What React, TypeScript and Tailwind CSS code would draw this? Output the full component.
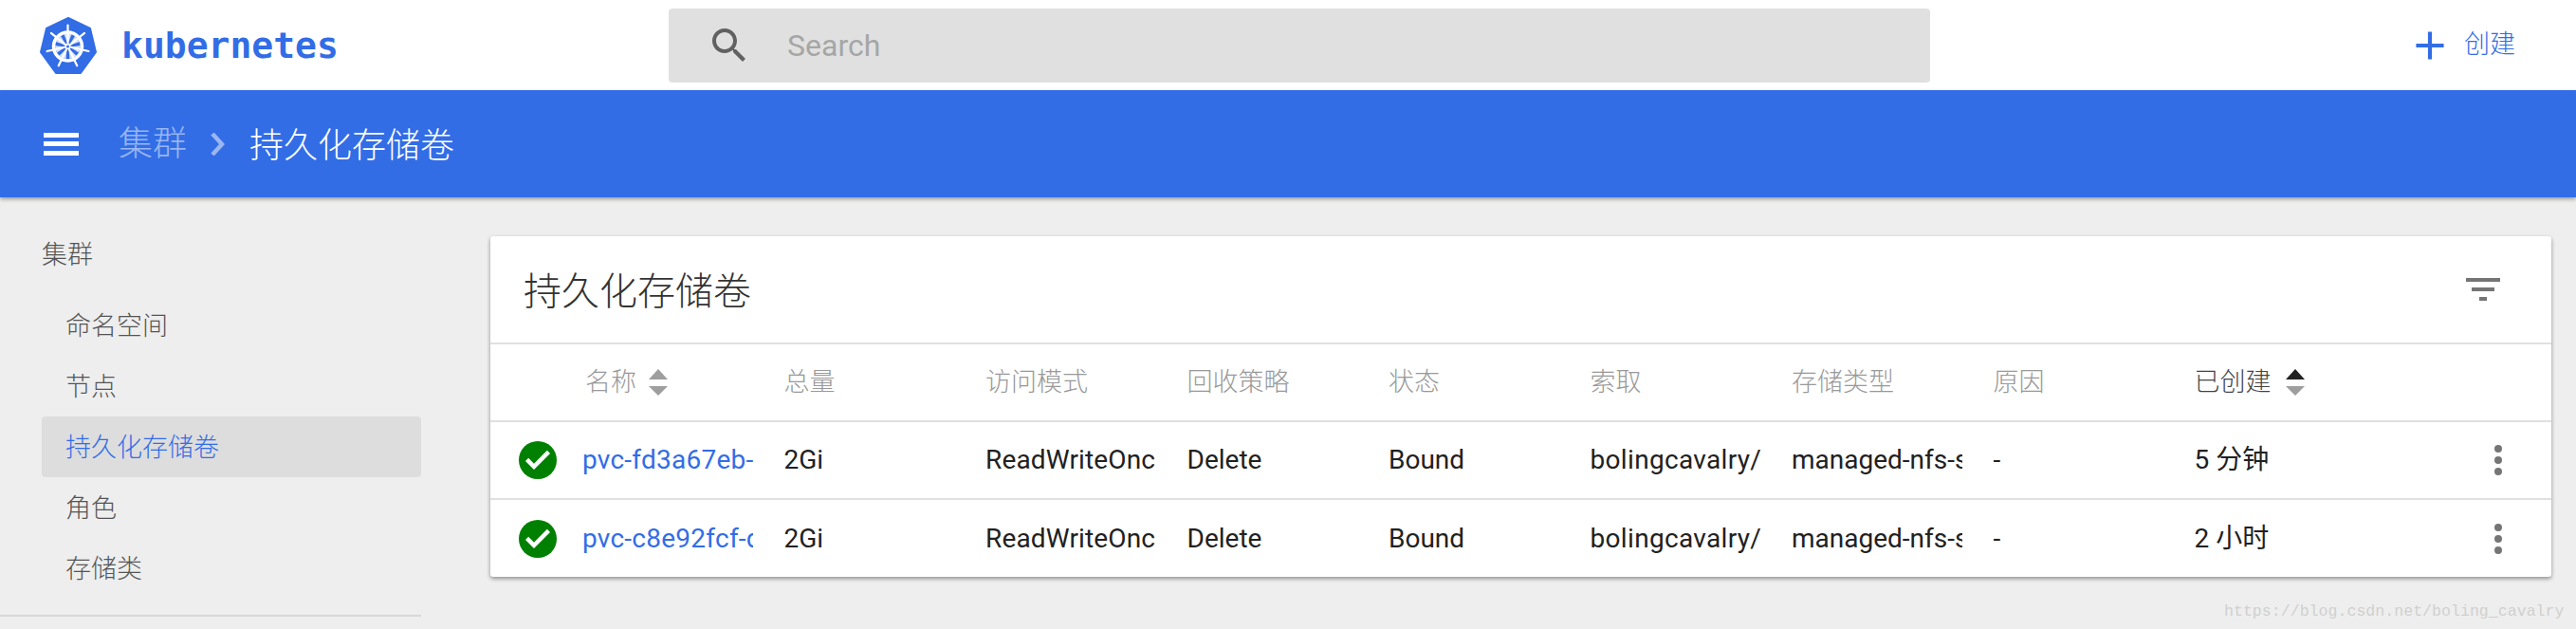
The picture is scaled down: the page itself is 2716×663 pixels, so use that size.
import React from 'react';

const cjk = "font-['Roboto','Noto_Sans_CJK_SC',sans-serif]";

const menuItems = ['命名空间', '节点', '持久化存储卷', '角色', '存储类'];

const columns = ['名称', '总量', '访问模式', '回收策略', '状态', '索取', '存储类型', '原因', '已创建'];

const rows = [
  { name: 'pvc-fd3a67eb-dc7c-11e8', age: '5 分钟' },
  { name: 'pvc-c8e92fcf-dc70-11e8', age: '2 小时' },
];

const gridCols = 'grid grid-cols-[97px_212.5px_212.5px_212.5px_212.5px_212.5px_212.5px_212.5px_212px_203px_1fr]';

function KubeLogo() {
  const spokes = [0, 51.4, 102.8, 154.3, 205.7, 257.1, 308.6];
  return (
    <svg width="60" height="60" viewBox="0 0 60 60">
      <path d="M30 1 L53 12 L59 37 L43 59 L17 59 L1 37 L7 12 Z" fill="#326de6" stroke="#326de6" strokeWidth="2" strokeLinejoin="round" />
      <circle cx="29.5" cy="31" r="15" fill="none" stroke="#fff" strokeWidth="3.5" />
      {spokes.map((a) => (
        <g key={a} transform={`rotate(${a} 29.5 31)`}>
          <line x1="29.5" y1="27.5" x2="29.5" y2="8.5" stroke="#fff" strokeWidth="2.2" strokeLinecap="round" />
          <path d="M28.5 26 L25.5 18 L33.5 18 L30.5 26 Z" fill="#fff" opacity="0.8" />
        </g>
      ))}
      <circle cx="29.5" cy="31" r="2.2" fill="#326de6" stroke="#fff" strokeWidth="1.4" />
    </svg>
  );
}

function SortIcon({ active, className }: { active?: boolean; className: string }) {
  return (
    <svg width="20" height="28" viewBox="0 0 20 28" className={`shrink-0 ${className}`}>
      <path d="M10 0 L20 11 L0 11 Z" fill={active ? '#212121' : '#9e9e9e'} />
      <path d="M0 18 L20 18 L10 28 Z" fill="#9e9e9e" />
    </svg>
  );
}

function CheckIcon() {
  return (
    <svg width="40" height="40" viewBox="0 0 24 24">
      <path fill="#008000" d="M12 0a12 12 0 1 0 0 24 12 12 0 0 0 0-24z" />
      <path fill="#fff" d="M9.6 18 4.2 12.6l1.9-1.9 3.5 3.5 8.3-8.3 1.9 1.9z" />
    </svg>
  );
}

function MoreIcon() {
  return (
    <svg width="12" height="34" viewBox="0 0 12 34">
      <circle cx="6" cy="5" r="4" fill="#757575" />
      <circle cx="6" cy="17" r="4" fill="#757575" />
      <circle cx="6" cy="29" r="4" fill="#757575" />
    </svg>
  );
}

export default function App() {
  return (
    <div className={`relative h-[663px] overflow-hidden bg-[#eeeeee] ${cjk}`}>
      {/* top toolbar */}
      <div className="flex h-[95px] items-center bg-white">
        <div className="ml-[42px] flex w-[663px] items-center">
          <KubeLogo />
          <span className="ml-[26px] font-['DejaVu_Sans_Mono',monospace] text-[38px] font-bold leading-none text-[#326de6]">kubernetes</span>
        </div>
        <div className="flex h-[78px] w-[1330px] items-center rounded-[4px] bg-[#e0e0e0]">
          <svg width="48" height="48" viewBox="0 0 24 24" className="ml-[40px]">
            <path fill="#616161" d="M15.5 14h-.79l-.28-.27C15.41 12.59 16 11.11 16 9.5 16 5.91 13.09 3 9.5 3S3 5.91 3 9.5 5.91 16 9.5 16c1.61 0 3.09-.59 4.23-1.57l.27.28v.79l5 4.99L20.49 19l-4.99-5zm-6 0C7.01 14 5 11.99 5 9.5S7.01 5 9.5 5 14 7.01 14 9.5 11.99 14 9.5 14z" />
          </svg>
          <span className="ml-[37px] text-[32px] text-[#a6a6a6]">Search</span>
        </div>
        <div className="ml-[502px] flex items-center text-[#326de6]">
          <svg width="50" height="50" viewBox="0 0 24 24">
            <path fill="#326de6" d="M19 13h-6v6h-2v-6H5v-2h6V5h2v6h6v2z" />
          </svg>
          <span className="ml-[11px] text-[27px] font-light">创建</span>
        </div>
      </div>

      {/* blue breadcrumb bar */}
      <div className="flex h-[113px] items-center bg-[#326de6] pl-[46px] shadow-[0_2px_4px_rgba(0,0,0,0.35)]">
        <div className="flex h-[24px] w-[37px] flex-col justify-between">
          <div className="h-[5px] bg-white" />
          <div className="h-[5px] bg-white" />
          <div className="h-[5px] bg-white" />
        </div>
        <span className="ml-[42px] mt-[1px] text-[36px] font-light text-white/50">集群</span>
        <svg width="16" height="24" viewBox="0 0 16 24" className="ml-[24px]">
          <path d="M3 1 L13 12 L3 23" fill="none" stroke="#9ab6f3" strokeWidth="4.5" />
        </svg>
        <span className="ml-[26px] mt-[4px] text-[36px] font-light text-white">持久化存储卷</span>
      </div>

      <div className="flex">
        {/* side menu */}
        <div className="w-[444px] shrink-0">
          <div className="flex h-[64px] items-center pl-[44px] pt-[58px] text-[27px] font-light text-[#555]">集群</div>
          <div className="mt-[39px] pl-[44px]">
            {menuItems.map((item) => (
              <div
                key={item}
                className={`flex h-[64px] items-center rounded-[4px] pl-[25px] pt-[2px] text-[27px] font-light ${item === '持久化存储卷' ? 'bg-[#dddddd] text-[#326de6]' : 'text-[#555]'}`}
              >
                {item}
              </div>
            ))}
          </div>
          <div className="mt-[17px] h-[2px] bg-[#d8d8d8]" />
        </div>

        {/* table card */}
        <div className="ml-[73px] mt-[41px] h-[359px] w-[2173px] rounded-[3px] bg-white shadow-[0_2px_4px_rgba(0,0,0,0.4)]">
          <div className="flex h-[114px] items-center justify-between border-b-[2px] border-[#e0e0e0] pl-[35px] pr-[54px]">
            <span className="mt-[5px] text-[40px] font-light leading-none text-[#333]">持久化存储卷</span>
            <svg width="36" height="24" viewBox="0 0 36 24">
              <path fill="#757575" d="M0 0h36v4H0zM6 10h24v4H6zM14 20h8v4h-8z" />
            </svg>
          </div>
          <div className={`${gridCols} h-[82px] items-center border-b-[2px] border-[#e0e0e0] text-[27px] font-light text-[#999]`}>
            <div />
            {columns.map((col) => (
              <div key={col} className={`flex items-center ${col === '已创建' ? 'text-[#444]' : ''} ${col === '名称' ? 'pl-[3px]' : ''}`}>
                {col}
                {col === '名称' && <SortIcon className="ml-[13px]" />}
                {col === '已创建' && <SortIcon active className="ml-[15px]" />}
              </div>
            ))}
            <div />
          </div>
          {rows.map((row, i) => (
            <div
              key={row.name}
              className={`${gridCols} items-center text-[28px] text-[#212121] ${i === 0 ? 'h-[82px] border-b-[2px] border-[#e0e0e0]' : 'h-[81px]'}`}
            >
              <div className="flex justify-end pr-[27px]">
                <CheckIcon />
              </div>
              <div className="w-[180px] overflow-hidden whitespace-nowrap tracking-[0.25px] text-[#326de6]">{row.name}</div>
              <div>2Gi</div>
              <div className="whitespace-nowrap tracking-[0.15px]">ReadWriteOnc</div>
              <div>Delete</div>
              <div>Bound</div>
              <div className="whitespace-nowrap tracking-[0.33px]">bolingcavalry/</div>
              <div className="w-[180px] overflow-hidden whitespace-nowrap">managed-nfs-storage</div>
              <div>-</div>
              <div>{row.age}</div>
              <div className="flex justify-end pr-[50px]">
                <MoreIcon />
              </div>
            </div>
          ))}
        </div>
      </div>

      <div className="absolute left-[2345px] top-[633px] font-['Liberation_Mono',monospace] text-[16.6px] text-[#d0d0d0]">
        https://blog.csdn.net/boling_cavalry
      </div>
    </div>
  );
}
